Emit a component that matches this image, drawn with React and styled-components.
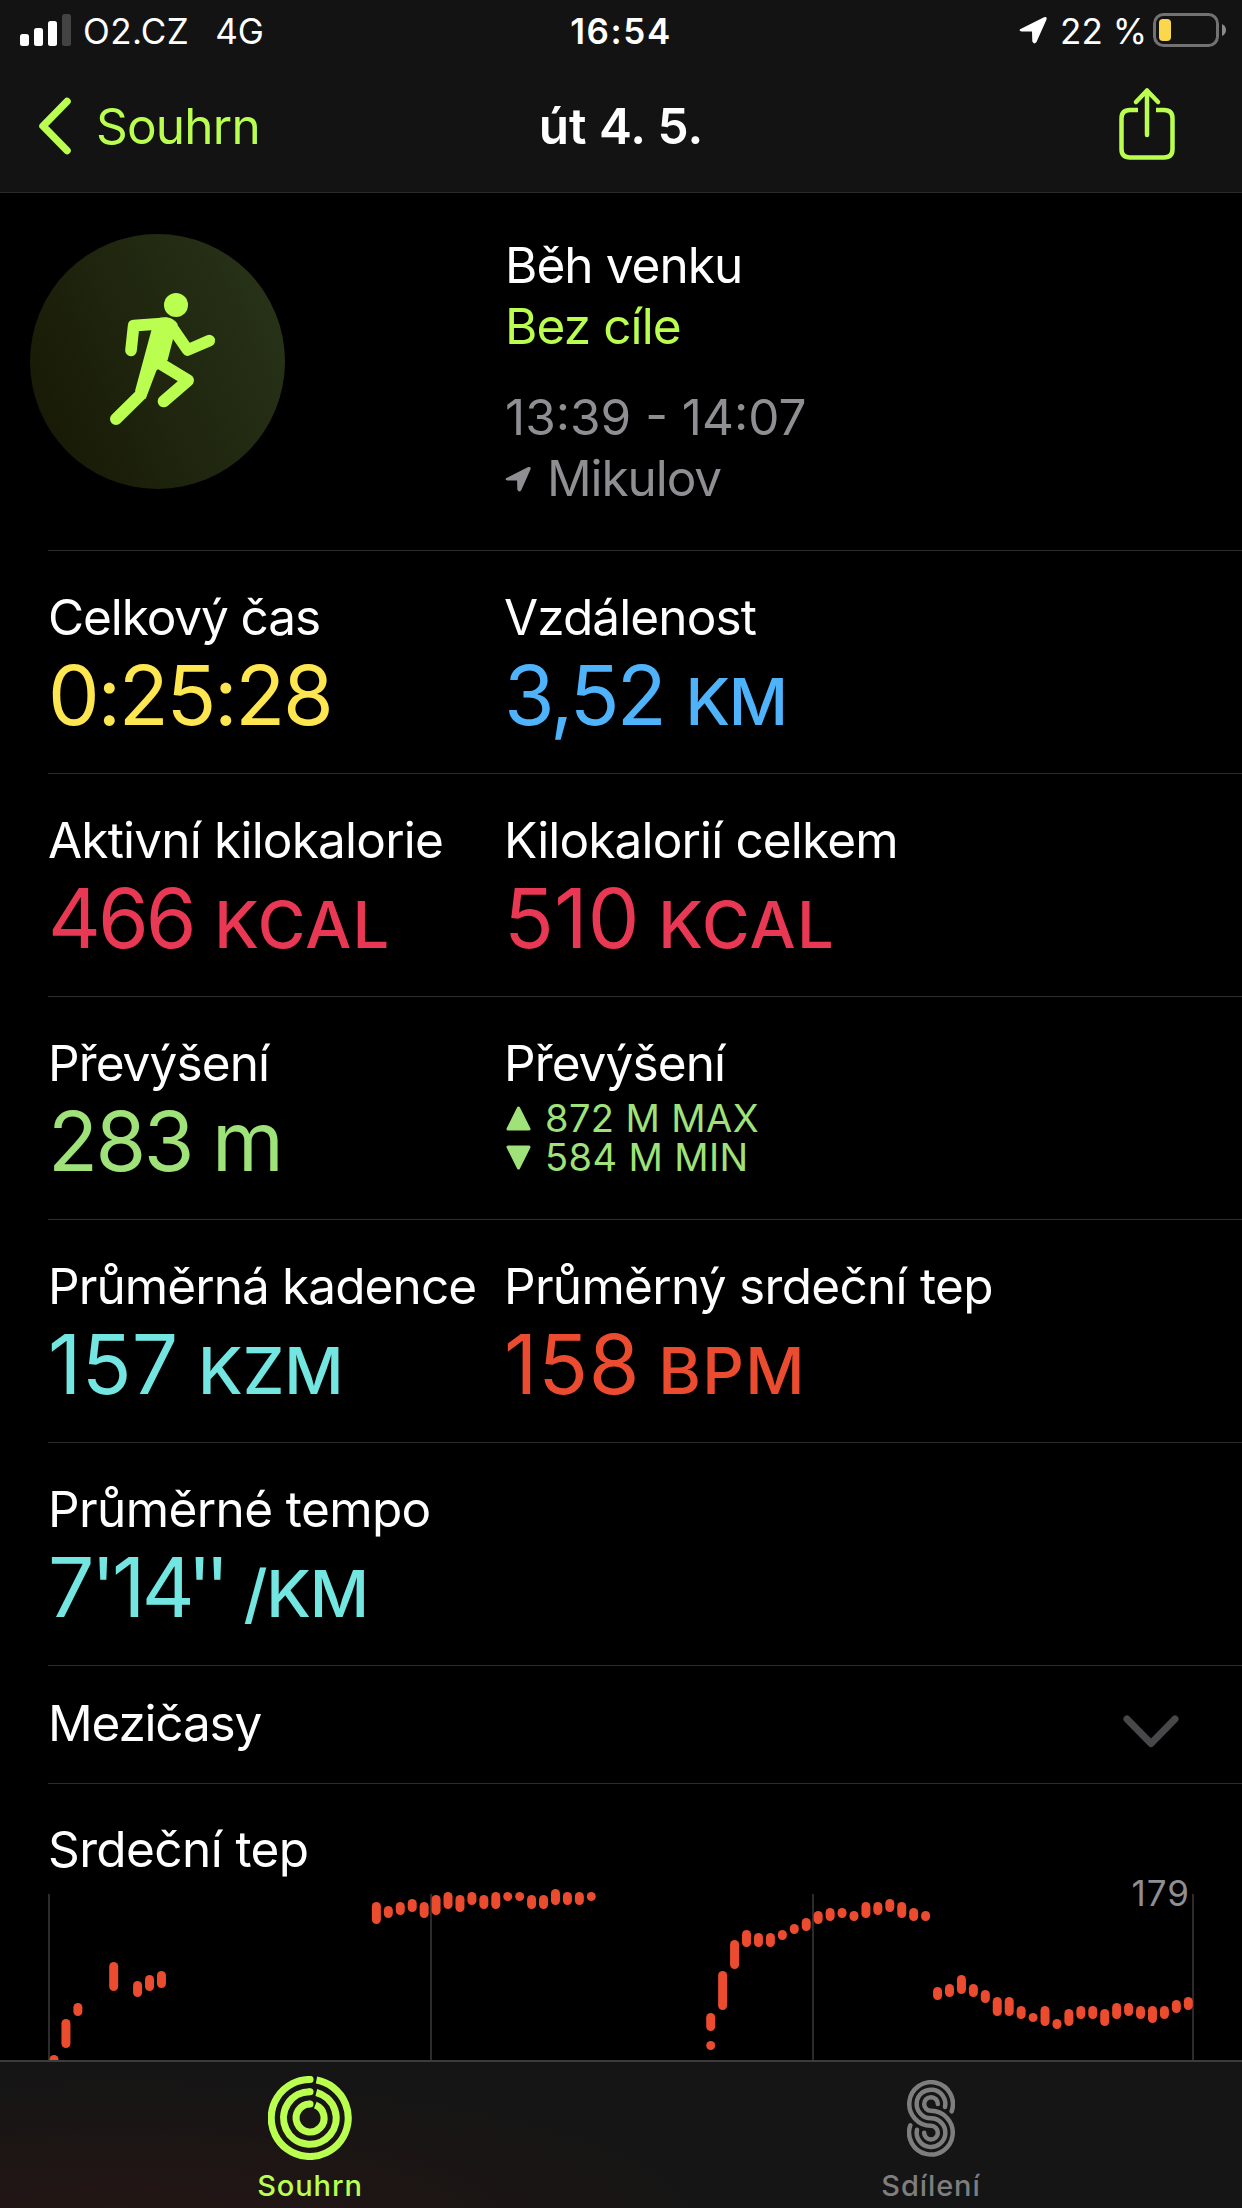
import React from "react";
import styled, { createGlobalStyle } from "styled-components";

const GlobalStyle = createGlobalStyle`
  * {
    box-sizing: border-box;
  }
  body {
    margin: 0;
    background: #000000;
    color: #ffffff;
    font-family: Inter, "Liberation Sans", sans-serif;
    font-size: 49.5px;
    line-height: 60px;
  }
  svg {
    display: block;
  }
`;

const Screen = styled.div`
  display: flex;
  flex-direction: column;
  width: 1242px;
  height: 2208px;
  overflow: hidden;
`;

const TopBar = styled.header`
  flex: none;
  height: 193px;
  background: #131313;
  border-bottom: 1px solid #2a2a2a;
`;

const StatusBar = styled.div`
  display: grid;
  grid-template-columns: 1fr auto 1fr;
  height: 60px;
  font-size: 35px;
`;

const StatusGroup = styled.div`
  display: flex;
  align-items: center;
  height: 60px;
  padding: 0 14px 0 20px;
  justify-content: ${(props) => (props.$end ? "flex-end" : "flex-start")};
`;

const StatusText = styled.span`
  height: 60px;
  line-height: 63px;
  white-space: pre;
  font-weight: ${(props) => (props.$bold ? 600 : 400)};
  letter-spacing: ${(props) => props.$spacing || 0}px;
  margin-left: ${(props) => props.$left || 0}px;
  margin-right: ${(props) => props.$right || 0}px;
`;

const NavBar = styled.nav`
  display: grid;
  grid-template-columns: 1fr auto 1fr;
  align-items: center;
  height: 132px;
`;

const BackLink = styled.a`
  display: flex;
  align-items: center;
  padding-left: 36px;
  color: #baff4f;
  gap: 23px;
  letter-spacing: -0.8px;
`;

const Title = styled.h1`
  margin: 0;
  font-size: 49.5px;
  font-weight: 600;
`;

const ShareButton = styled.div`
  justify-self: end;
  padding: 0 66px 4px 0;
`;

const Content = styled.main`
  flex: 1;
  min-height: 0;
  overflow: hidden;
`;

const Summary = styled.section`
  display: grid;
  grid-template-columns: 475px 1fr;
  height: 357px;
  padding-left: 30px;
`;

const Badge = styled.div`
  width: 255px;
  height: 255px;
  margin-top: 41px;
  border-radius: 50%;
  background: linear-gradient(65deg, #181a06 10%, #283318 92%);
`;

const SummaryText = styled.div`
  padding-top: 42px;
  line-height: 61px;
`;

const Line = styled.div`
  display: flex;
  align-items: center;
  white-space: pre;
  color: ${(props) => props.$color || "#ffffff"};
  letter-spacing: ${(props) => props.$spacing || 0}px;
  margin-top: ${(props) => props.$top || 0}px;
`;

const Place = styled.span`
  margin-left: 16px;
`;

const Row = styled.section`
  display: grid;
  grid-template-columns: 456px 1fr;
  height: 223.1px;
  margin-left: 48px;
  padding-top: 36px;
  border-top: 1px solid #2c2c2c;
`;

const Label = styled.div`
  height: 60px;
  white-space: nowrap;
  letter-spacing: ${(props) => props.$spacing || 0}px;
`;

const Value = styled.div`
  display: flex;
  align-items: baseline;
  height: 96px;
  line-height: 98px;
  font-size: 82px;
  color: ${(props) => props.$color};
  letter-spacing: ${(props) => props.$spacing || 0}px;
`;

const Kern = styled.span`
  letter-spacing: ${(props) => props.$by}px;
`;

const Unit = styled.span`
  font-size: ${(props) => (props.$lower ? 82 : 65)}px;
  font-weight: ${(props) => (props.$lower ? 400 : 500)};
  margin-left: ${(props) => props.$gap || 20}px;
  letter-spacing: ${(props) => props.$spacing || 0}px;
`;

const RangeList = styled.div`
  padding-top: 6px;
`;

const Range = styled.div`
  display: flex;
  align-items: center;
  gap: 14px;
  height: 39px;
  font-size: 38px;
  line-height: 39px;
  color: #a0e27a;
  padding-left: 2px;
  letter-spacing: 0.4px;
`;

const Splits = styled.section`
  display: flex;
  justify-content: space-between;
  align-items: center;
  height: 117.5px;
  margin-left: 48px;
  padding-right: 60px;
  border-top: 1px solid #2c2c2c;
`;

const SplitsTitle = styled.span`
  padding-bottom: 4px;
  letter-spacing: -1.2px;
`;

const ChevronSlot = styled.div`
  padding-top: 14px;
`;

const HeartRate = styled.section`
  position: relative;
  margin-left: 48px;
  padding-top: 35px;
  border-top: 1px solid #2c2c2c;
`;

const MaxRate = styled.span`
  position: absolute;
  top: 78px;
  right: 52px;
  font-size: 35px;
  line-height: 62px;
  letter-spacing: 1px;
  color: #8e8e93;
`;

const ChartArea = styled.div`
  height: 182px;
  padding-top: 1px;
  overflow: hidden;
`;

const TabBar = styled.footer`
  flex: none;
  display: grid;
  grid-template-columns: 620px 1fr;
  height: 148px;
  border-top: 2px solid #3d3c3c;
  background: radial-gradient(
      ellipse 620px 150px at 120px 160px,
      #241614 0%,
      rgba(36, 22, 20, 0) 100%
    ),
    #151515;
`;

const Tab = styled.div`
  display: flex;
  flex-direction: column;
  align-items: center;
  padding-top: 14px;
  font-size: 29px;
  font-weight: 500;
  line-height: 36px;
  letter-spacing: 0.9px;
  color: ${(props) => (props.$active ? "#baff4f" : "#7e7e7e")};
`;

const TabIcon = styled.div`
  display: flex;
  align-items: center;
  height: 84px;
  margin-bottom: 8px;
`;

const metrics = [
  [
    { label: "Celkový čas", tracking: -1.1, value: "0:25:28", spacing: -2.3, color: "#fde650" },
    {
      label: "Vzdálenost",
      tracking: -0.9,
      value: "3,52",
      spacing: -2.8,
      unit: { text: "KM", gap: 21.5, spacing: -1.5 },
      color: "#4fb3fb",
    },
  ],
  [
    {
      label: "Aktivní kilokalorie",
      tracking: -0.8,
      value: "466",
      spacing: -3,
      unit: { text: "KCAL", gap: 20.5, spacing: 1.2 },
      color: "#e83854",
    },
    {
      label: "Kilokalorií celkem",
      tracking: -0.85,
      value: "510",
      spacing: 0.3,
      unit: { text: "KCAL", gap: 18.5, spacing: 1.3 },
      color: "#e83854",
    },
  ],
  [
    {
      label: "Převýšení",
      tracking: -0.9,
      value: "283",
      spacing: -2.5,
      unit: { text: "m", lower: true, gap: 20 },
      color: "#a0e27a",
    },
    { label: "Převýšení", tracking: -0.9, range: ["872 M MAX", "584 M MIN"] },
  ],
  [
    {
      label: "Průměrná kadence",
      tracking: -0.9,
      value: "157",
      spacing: 0.3,
      unit: { text: "KZM", gap: 19.5 },
      color: "#73e6e2",
    },
    {
      label: "Průměrný srdeční tep",
      tracking: -0.7,
      value: "158",
      spacing: 0.8,
      unit: { text: "BPM", gap: 18, spacing: 1.2 },
      color: "#eb4b2f",
    },
  ],
  [
    {
      label: "Průměrné tempo",
      tracking: -0.6,
      value: (
        <span>
          <Kern $by={-3.5}>7'1</Kern>
          <Kern $by={-7.5}>4</Kern>
          <Kern $by={-7}>''</Kern>
        </span>
      ),
      unit: { text: "/KM", gap: 21, spacing: -1.2 },
      color: "#73e6e2",
    },
  ],
];

// [slot, top, bottom] of every heart rate sample
const samples = [
  [0, 175, 190], [1, 139, 168], [2, 123, 136], [5, 82, 111], [7, 101, 117],
  [8, 95, 111], [9, 91, 108], [27, 22, 44], [28, 26, 38], [29, 22, 35],
  [30, 19, 32], [31, 22, 38], [32, 15, 35], [33, 12, 29], [34, 15, 32],
  [35, 12, 25], [36, 15, 29], [37, 12, 29], [38, 12, 21], [39, 12, 21],
  [40, 15, 29], [41, 15, 29], [42, 9, 25], [43, 12, 25], [44, 12, 25],
  [45, 12, 21], [55, 133, 151], [55, 161, 170], [56, 91, 130], [57, 60, 89],
  [58, 50, 67], [59, 53, 67], [60, 53, 67], [61, 50, 60], [62, 44, 54],
  [63, 38, 51], [64, 31, 44], [65, 28, 41], [66, 28, 38], [67, 31, 41],
  [68, 22, 38], [69, 22, 35], [70, 19, 32], [71, 22, 38], [72, 28, 41],
  [73, 31, 41], [74, 107, 120], [75, 104, 117], [76, 95, 114], [77, 104, 117],
  [78, 110, 123], [79, 117, 136], [80, 117, 136], [81, 126, 139],
  [82, 133, 142], [83, 126, 146], [84, 139, 149], [85, 129, 146],
  [86, 126, 139], [87, 126, 139], [88, 129, 146], [89, 123, 139],
  [90, 123, 136], [91, 126, 139], [92, 126, 143], [93, 126, 139],
  [94, 120, 133], [95, 117, 130],
];

function LocationArrow({ size, color }) {
  return (
    <svg width={size} height={size} viewBox="0 0 28 28">
      <path
        d="M1.6 13 25 1.2Q28.500 .2 27.400 3.800L17.500 26Q15 29 13.300 25.600L13 15.500 2.600 15.500Q-.8 14.500 1.600 13Z"
        fill={color}
      />
    </svg>
  );
}

function SignalBars() {
  return (
    <svg width="51" height="32" viewBox="0 0 51 32">
      <rect x="0" y="20" width="9" height="12" rx="2.500" fill="#fff" />
      <rect x="14" y="14" width="9" height="18" rx="2.500" fill="#fff" />
      <rect x="28" y="7" width="9" height="25" rx="2.500" fill="#fff" />
      <rect x="42" y="0" width="9" height="32" rx="2.500" fill="#434343" />
    </svg>
  );
}

function Battery() {
  return (
    <svg width="75" height="34" viewBox="0 0 75 34">
      <rect x="1.500" y="1.500" width="63" height="31" rx="9" fill="none" stroke="#727272" strokeWidth="3" />
      <rect x="6" y="6" width="12" height="22" rx="4" fill="#fbd74b" />
      <path d="M69 11Q73 13 73 17T69 23Z" fill="#8a8a8a" />
    </svg>
  );
}

function Runner() {
  return (
    <svg width="255" height="255" viewBox="90 102 765 765">
      <g fill="#baff4f" stroke="#baff4f" strokeLinecap="round" strokeLinejoin="round">
        <circle cx="528" cy="315" r="36" stroke="none" />
        <path d="M455 388 480 353 500 352Q522 355 533 372L519 418 503 480 469 512 437 597 405 573Z" stroke="none" />
        <path d="M393 451 401 377 495 370 516 382 563 450 628 422" fill="none" strokeWidth="35" />
        <path d="M480 490 564 541 491 604M421 585 348 657" fill="none" strokeWidth="36" />
      </g>
    </svg>
  );
}

function RingsIcon() {
  return (
    <svg width="84" height="84" viewBox="-42 -42 84 84">
      <g fill="none" stroke="#baff4f" strokeWidth="7.100">
        <path d="M6.500-37.900A38.500 38.500 0 1 1 0-38.500" />
        <path d="M6.300-25.500A26.300 26.300 0 1 1 0-26.300" />
        <path d="M5.300-13A14 14 0 1 1 0-14" />
      </g>
      <g fill="#baff4f">
        <circle cx="0" cy="-38.500" r="3.550" />
        <circle cx="0" cy="-26.300" r="3.550" />
        <circle cx="0" cy="-14" r="3.550" />
      </g>
    </svg>
  );
}

function SharingIcon() {
  return (
    <svg width="48" height="77" viewBox="201 89 144 231">
      <g fill="none" stroke="#7e7e7e" strokeWidth="13.500" strokeLinecap="round">
        <path d="M335 183A65.500 65.500 0 1 0 273 226.500A20.500 20.500 0 1 1 252.500 247" />
        <path d="M315 170A43 43 0 1 0 273 204A43 43 0 1 1 231 238" />
        <path d="M293.500 161A20.500 20.500 0 1 0 273 181.500A65.500 65.500 0 1 1 211 225" />
      </g>
    </svg>
  );
}

function HeartChart() {
  return (
    <svg width="1194" height="200" viewBox="48 0 1194 200">
      {[48, 430, 812, 1192].map((x) => (
        <rect key={x} x={x} y="14" width="2" height="186" fill="#2b2b2b" />
      ))}
      {samples.map(([slot, top, bottom]) => (
        <rect
          key={`${slot}-${top}`}
          x={49.5 + slot * 11.94}
          y={top}
          width="9"
          height={bottom - top}
          rx="4.500"
          fill="#eb4b2f"
        />
      ))}
    </svg>
  );
}

function Metric({ metric }) {
  const { label, tracking, value, spacing, unit, color, range } = metric;
  return (
    <div>
      <Label $spacing={tracking}>{label}</Label>
      {range ? (
        <RangeList>
          <Range>
            <svg width="25" height="25" viewBox="0 0 25 25">
              <path d="M12.500 2 23 23H2Z" fill="#a0e27a" stroke="#a0e27a" strokeWidth="3" strokeLinejoin="round" />
            </svg>
            {range[0]}
          </Range>
          <Range>
            <svg width="25" height="25" viewBox="0 0 25 25">
              <path d="M12.500 23 2 2H23Z" fill="#a0e27a" stroke="#a0e27a" strokeWidth="3" strokeLinejoin="round" />
            </svg>
            {range[1]}
          </Range>
        </RangeList>
      ) : (
        <Value $color={color} $spacing={spacing}>
          {value}
          {unit && (
            <Unit $lower={unit.lower} $gap={unit.gap} $spacing={unit.spacing}>
              {unit.text}
            </Unit>
          )}
        </Value>
      )}
    </div>
  );
}

function App() {
  return (
    <Screen>
      <GlobalStyle />
      <TopBar>
        <StatusBar>
          <StatusGroup>
            <SignalBars />
            <StatusText $left={12} $spacing={0.4}>O2.CZ</StatusText>
            <StatusText $left={26}>4G</StatusText>
          </StatusGroup>
          <StatusText $bold $spacing={1.6}>16:54</StatusText>
          <StatusGroup $end>
            <LocationArrow size={28} color="#ffffff" />
            <StatusText $left={13} $right={6}>22 %</StatusText>
            <Battery />
          </StatusGroup>
        </StatusBar>
        <NavBar>
          <BackLink>
            <svg width="37" height="60" viewBox="0 0 37 60">
              <path d="M31 5.500 7 30 31 54.500" fill="none" stroke="#baff4f" strokeWidth="7.500" strokeLinecap="round" strokeLinejoin="round" />
            </svg>
            Souhrn
          </BackLink>
          <Title>út 4. 5.</Title>
          <ShareButton>
            <svg width="58" height="74" viewBox="0 0 58 74">
              <g fill="none" stroke="#baff4f" strokeWidth="4.500" strokeLinecap="round" strokeLinejoin="round">
                <path d="M20 23H12Q3.500 23 3.500 31.500V62Q3.500 70.500 12 70.500H46Q54.500 70.500 54.500 62V31.500Q54.500 23 46 23H38" strokeLinecap="butt" />
                <path d="M29 48V3.500M18 15 29 3.500 40 15" />
              </g>
            </svg>
          </ShareButton>
        </NavBar>
      </TopBar>
      <Content>
        <Summary>
          <Badge>
            <Runner />
          </Badge>
          <SummaryText>
            <Line $spacing={-0.95}>Běh venku</Line>
            <Line $spacing={-0.9} $color="#baff4f">Bez cíle</Line>
            <Line $color="#8e8e93" $top={30}>13:39 - 14:07</Line>
            <Line $spacing={-1.1} $color="#8e8e93">
              <LocationArrow size={26} color="#8e8e93" />
              <Place>Mikulov</Place>
            </Line>
          </SummaryText>
        </Summary>
        {metrics.map((row) => (
          <Row key={row[0].label}>
            {row.map((metric, i) => (
              <Metric key={i} metric={metric} />
            ))}
          </Row>
        ))}
        <Splits>
          <SplitsTitle>Mezičasy</SplitsTitle>
          <ChevronSlot>
            <svg width="62" height="36" viewBox="0 0 62 36">
              <path d="M7 5 31 29.500 55 5" fill="none" stroke="#48484a" strokeWidth="7" strokeLinecap="round" strokeLinejoin="round" />
            </svg>
          </ChevronSlot>
        </Splits>
        <HeartRate>
          <Label $spacing={-0.6}>Srdeční tep</Label>
          <MaxRate>179</MaxRate>
          <ChartArea>
            <HeartChart />
          </ChartArea>
        </HeartRate>
      </Content>
      <TabBar>
        <Tab $active>
          <TabIcon>
            <RingsIcon />
          </TabIcon>
          <span>Souhrn</span>
        </Tab>
        <Tab>
          <TabIcon>
            <SharingIcon />
          </TabIcon>
          <span>Sdílení</span>
        </Tab>
      </TabBar>
    </Screen>
  );
}

export default App;
